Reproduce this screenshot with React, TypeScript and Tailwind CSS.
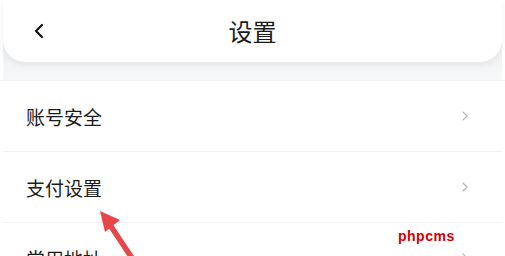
import { ChevronLeft, ChevronRight } from "lucide-react"

const rows = ["账号安全", "支付设置", "常用地址"]

const font = { fontFamily: '"Noto Sans CJK SC", "Noto Sans", sans-serif' }

function Row({ label }: { label: string }) {
  return (
    <div className="mx-[3px] flex h-[71px] items-center justify-between border-b border-[#f1f2f3] pl-[23px] pr-[29px]">
      <span className="text-[19px] leading-none text-[#1c1c1c]">{label}</span>
      <ChevronRight className="h-[16px] w-[16px] text-[#b4b4b4]" strokeWidth={1.6} />
    </div>
  )
}

export default function App() {
  return (
    <div className="relative h-[256px] w-[505px] overflow-hidden bg-white" style={font}>
      <div className="mx-[3px] bg-gradient-to-b from-[#e6e8eb] to-[#f6f7f8] pb-[18px]">
        <div className="relative flex h-[62px] items-center justify-center rounded-b-[22px] bg-white shadow-[0_3px_6px_rgba(0,0,0,0.06)]">
          <ChevronLeft className="absolute left-[24px] top-[19px] h-[24px] w-[24px] text-[#111]" strokeWidth={2.2} />
          <span className="text-[24px] leading-none text-[#1a1a1a]">设置</span>
        </div>
      </div>
      <div className="h-px bg-[#f3f4f5]" />
      {rows.map((r) => (
        <Row key={r} label={r} />
      ))}
      <svg className="absolute left-0 top-0" width="505" height="256" viewBox="0 0 505 256">
        <line x1="110" y1="225" x2="132" y2="258" stroke="#e8474a" strokeWidth="5.5" strokeLinecap="round" />
        <polygon points="100,211 120,220 105,232" fill="#e8474a" />
      </svg>
      <span
        className="absolute left-[398px] top-[229px] text-[14px] font-bold leading-none tracking-[0.5px] text-[#d00000]"
        style={{ fontFamily: '"Liberation Sans", Arial, sans-serif' }}
      >
        phpcms
      </span>
    </div>
  )
}
